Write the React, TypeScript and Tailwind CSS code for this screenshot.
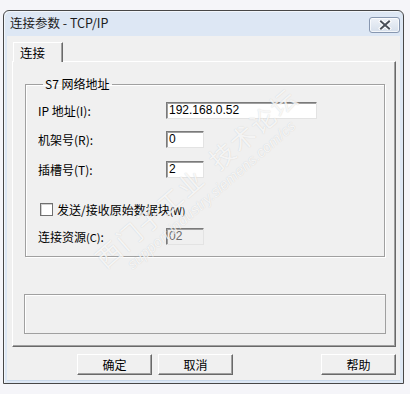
import React from "react";

const sunken =
  "border border-t-[#7a7a7a] border-l-[#7a7a7a] border-r-[#e3e3e3] border-b-[#e3e3e3] shadow-[inset_1px_1px_0_#a0a0a0]";

function Btn({ label, className = "" }: { label: string; className?: string }) {
  return (
    <div
      className={
        "w-[75px] h-[21px] flex items-center justify-center bg-[#f0f0f0] border border-t-white border-l-white border-r-[#696969] border-b-[#696969] shadow-[inset_-1px_-1px_0_#a0a0a0] text-[12px] leading-none text-black " +
        className
      }
    >
      {label}
    </div>
  );
}

export default function App() {
  return (
    <div className="relative w-[410px] h-[394px] overflow-hidden bg-[#f5f5f9] pt-[10px] pl-[3px] font-['Noto_Sans_CJK_SC','Noto_Sans',sans-serif] text-[12px] text-black">
      <div className="w-[401px] h-[374px] flex flex-col border border-[#474747] rounded-t-[6px] bg-[#dde7f4] shadow-[inset_1px_1px_0_#f2f6fb]">
        {/* Title bar */}
        <div className="h-[25px] flex items-center justify-between pl-[6px] pr-[3px]">
          <span className="text-[12.5px] leading-none text-[#1b1b1b]">连接参数 - TCP/IP</span>
          <div className="self-start mt-[6px] w-[31px] h-[16px] rounded-[3px] border border-[#8797b0] bg-gradient-to-b from-[#eef2f8] to-[#d6dfeb] shadow-[inset_0_0_0_1px_rgba(255,255,255,0.7)] flex items-center justify-center">
            <svg width="14" height="10" viewBox="0 0 14 10">
              <path d="M3 1.5 L11 8.5 M11 1.5 L3 8.5" stroke="#ffffff" strokeWidth="4" strokeLinecap="square" />
              <path d="M3 1.5 L11 8.5 M11 1.5 L3 8.5" stroke="#4a4f58" strokeWidth="2" strokeLinecap="square" />
            </svg>
          </div>
        </div>

        {/* Client area */}
        <div className="flex-1 mx-[3px] mb-[3px] bg-[#f0f0f0] flex flex-col pt-[6px] pl-[5px] pr-[4px] shadow-[0_1px_0_#c9d8ea]">
          {/* Tab */}
          <div className="relative z-10 -mb-px ml-[1px] w-[50px] h-[20px] bg-[#f0f0f0] border-t border-l border-white border-r border-r-[#696969] shadow-[inset_-1px_0_0_#a0a0a0] pl-[6px] pt-[2px] text-[12.5px] leading-[15px]">
            连接
          </div>

          {/* Tab panel */}
          <div className="h-[286px] flex flex-col border border-t-white border-l-white border-r-[#696969] border-b-[#696969] shadow-[inset_-1px_-1px_0_#a0a0a0]">
            <fieldset className="mt-[15px] ml-[12px] w-[360px] h-[180px] border border-[#a0a0a0] shadow-[inset_1px_1px_0_#fff,1px_1px_0_#fff] px-[12px] flex flex-col">
              <legend className="ml-[5px] px-[2px] leading-[14px] text-[12px]">S7 网络地址</legend>

              <div className="mt-[11px] flex items-center h-[17px]">
                <span className="w-[128px]">IP 地址(I):</span>
                <div className={"w-[151px] h-[17px] bg-white pl-[2px] font-['Liberation_Sans',sans-serif] text-[12px] leading-[15px] " + sunken}>
                  192.168.0.52
                </div>
              </div>

              <div className="mt-[12px] flex items-center h-[17px]">
                <span className="w-[128px]">机架号(R):</span>
                <div className={"w-[38px] h-[17px] bg-white pl-[2px] font-['Liberation_Sans',sans-serif] text-[12px] leading-[15px] " + sunken}>
                  0
                </div>
              </div>

              <div className="mt-[13px] flex items-center h-[17px]">
                <span className="w-[128px]">插槽号(T):</span>
                <div className={"w-[38px] h-[17px] bg-white pl-[2px] font-['Liberation_Sans',sans-serif] text-[12px] leading-[15px] " + sunken}>
                  2
                </div>
              </div>

              <div className="mt-[24px] flex items-center h-[15px]">
                <div className="ml-[2px] w-[13px] h-[13px] bg-white border border-[#707070] shadow-[inset_1px_1px_0_#d0d0d0]" />
                <span className="ml-[4px]">
                  发送/接收原始数据块<span className="text-[10px]">(W)</span>
                </span>
              </div>

              <div className="mt-[11px] flex items-center h-[17px]">
                <span className="w-[128px]">
                  连接资源<span className="text-[11px]">(C)</span>:
                </span>
                <div className={"w-[38px] h-[17px] bg-[#f0f0f0] pl-[2px] font-['Liberation_Sans',sans-serif] text-[12px] leading-[15px] text-[#6d6d6d] " + sunken}>
                  02
                </div>
              </div>
            </fieldset>

            <div className="mt-[37px] ml-[11px] w-[362px] h-[40px] border border-[#a0a0a0] shadow-[inset_1px_1px_0_#fff]" />
          </div>

          {/* Buttons */}
          <div className="mt-[7px] flex">
            <Btn label="确定" className="ml-[65px]" />
            <Btn label="取消" className="ml-[6px]" />
            <Btn label="帮助" className="ml-auto" />
          </div>
        </div>
      </div>

      {/* Watermark */}
      <div className="pointer-events-none absolute left-[202px] top-[184px] -translate-x-1/2 -translate-y-1/2 rotate-[-41deg] flex flex-col items-center whitespace-nowrap">
        <span className="text-[25px] leading-[28px] tracking-[2px] text-white/80 [text-shadow:0_0_1px_rgba(0,0,0,0.18)]">
          西门子工业&nbsp;&nbsp;技术论坛
        </span>
        <span className="mt-[1px] font-['Liberation_Sans',sans-serif] italic text-[15px] leading-[18px] text-white/80 [text-shadow:0_0_1px_rgba(0,0,0,0.18)]">
          support.industry.siemens.com/cs
        </span>
      </div>
    </div>
  );
}
